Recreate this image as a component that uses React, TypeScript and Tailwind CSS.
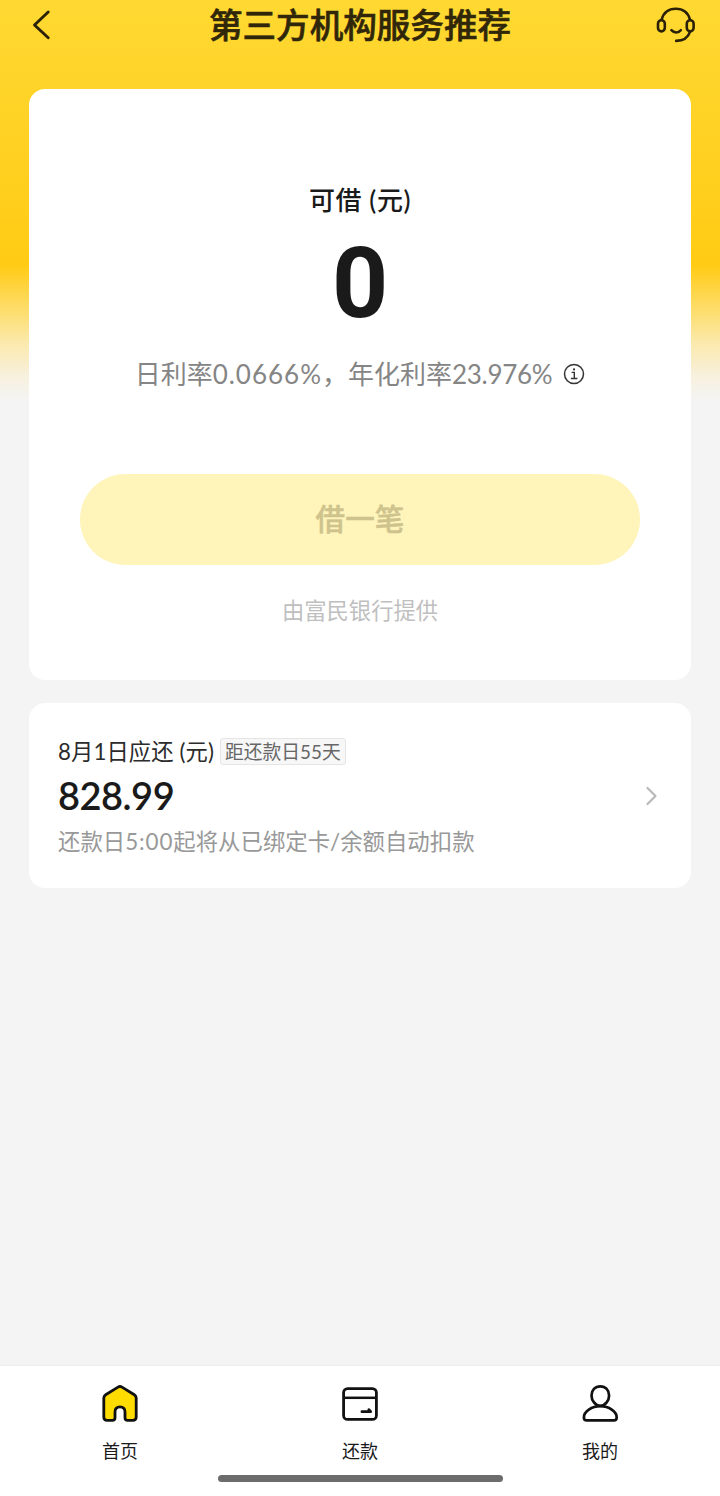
import React from 'react';

function BackIcon() {
  return (
    <svg className="h-10 w-10" viewBox="0 0 40 40" fill="none" stroke="#2b2106" strokeWidth="2.9" strokeLinecap="round" strokeLinejoin="round">
      <path d="M28.2 12 14.5 25 28.2 37.8" />
    </svg>
  );
}

function ServiceIcon() {
  return (
    <svg className="h-11 w-11" viewBox="0 0 44 44" fill="none" stroke="#2b2106" strokeWidth="2.6" strokeLinecap="round">
      <rect x="5" y="20.2" width="6.8" height="11.2" rx="3.4" />
      <rect x="33.8" y="20.2" width="6.8" height="11.2" rx="3.4" />
      <path d="M8.6 19.6C10.6 12.6 16 8.8 22.8 8.8S35 12.6 37 19.6" />
      <path d="M37 31.8c-2 6-7.4 8.9-13.8 9.1" />
      <path d="M18.4 30.2c2.6 3 7 3 9.4 0" />
    </svg>
  );
}

function InfoIcon() {
  return (
    <svg className="h-[22px] w-[22px]" viewBox="0 0 22 22" fill="none" stroke="#333" strokeWidth="1.5">
      <circle cx="11" cy="11" r="9.5" />
      <path d="M8.6 9.4h2.7v6M7.9 15.5h6.5" strokeWidth="1.4" />
      <circle cx="11" cy="6.4" r="1.1" fill="#333" stroke="none" />
    </svg>
  );
}

function HomeIcon() {
  return (
    <svg className="h-10 w-10" viewBox="0 0 40 40" fill="#ffdc00" stroke="#111" strokeWidth="2.8" strokeLinejoin="round">
      <path d="M18 4.1 5.7 11.7Q3.8 12.9 3.8 15V34Q3.8 37.4 7.2 37.4H12.3Q15 37.4 15 34.7V29Q15 23.9 20 23.9T25 29V34.7Q25 37.4 27.7 37.4H32.8Q36.2 37.4 36.2 34V15Q36.2 12.9 34.3 11.7L22 4.1Q20 2.9 18 4.1Z" />
    </svg>
  );
}

function RepayIcon() {
  return (
    <svg className="h-10 w-10" viewBox="0 0 40 40" fill="none" stroke="#111" strokeWidth="2.8" strokeLinecap="round" strokeLinejoin="round">
      <rect x="3.6" y="5.6" width="32.8" height="30.8" rx="4" />
      <path d="M4 14.8h32" strokeWidth="2.5" strokeLinecap="butt" />
      <path d="M21.9 28.7h7v-2.2l1.8 2.2Z" fill="#111" strokeWidth="2.7" />
    </svg>
  );
}

function UserIcon() {
  return (
    <svg className="h-10 w-10" viewBox="0 0 40 40" fill="none" stroke="#111" strokeWidth="2.7" strokeLinejoin="round">
      <path d="M20.3 3.3c-5.2 0-8.8 3.9-8.8 9.1 0 4.8 3.6 10.4 8.8 10.4s8.8-5.6 8.8-10.4c0-5.2-3.6-9.1-8.8-9.1Z" />
      <path d="M20.3 23.2C11.6 23.2 3.9 28.8 3.9 34.4Q3.9 37.3 6.7 37.3H33.9Q36.7 37.3 36.7 34.4C36.7 28.8 29 23.2 20.3 23.2Z" />
    </svg>
  );
}

const tabs = [
  { label: '首页', icon: <HomeIcon /> },
  { label: '还款', icon: <RepayIcon /> },
  { label: '我的', icon: <UserIcon /> },
];

export default function App() {
  return (
    <div className="flex h-[1496px] w-[720px] flex-col overflow-hidden bg-[#f4f4f4] bg-[linear-gradient(180deg,#ffd932_0px,#ffd42a_80px,#ffcb14_265px,#fedb62_305px,#fbeab0_345px,#f7f0dc_375px,#f4f4f4_400px)] font-['Lato','Noto_Sans_CJK_SC',sans-serif] whitespace-nowrap">
      <header className="flex h-[89px] items-start justify-between pr-[23px] pl-5">
        <button aria-label="返回"><BackIcon /></button>
        <h1 className="mt-[2px] ml-[7px] text-[33.6px] leading-[46px] font-medium text-[#30270a] [-webkit-text-stroke:0.6px_#30270a]">第三方机构服务推荐</h1>
        <button aria-label="客服"><ServiceIcon /></button>
      </header>

      <main className="flex flex-1 flex-col gap-[23px] px-[29px]">
        <section className="flex h-[591px] flex-col items-center rounded-2xl bg-white">
          <h2 className="mt-[93px] text-[26px] leading-9 font-medium tracking-[0.6px] text-[#1a1a1a]">可借 (元)</h2>
          <div className="mt-[18px] font-['Roboto',sans-serif] text-[98px] leading-[96px] font-bold text-[#1a1a1a]">0</div>
          <div className="mt-[24px] flex h-9 items-center gap-[11px] text-[26px] leading-9 text-[#858585]">
            <p>日利率<span className="tracking-[1px]">0.0666%</span>，年化利率<span className="tracking-[-0.3px]">23.976%</span></p>
            <InfoIcon />
          </div>
          <button className="mt-[82px] h-[91px] w-[560px] rounded-full bg-[#fff5ba] text-[29.6px] font-medium text-[#cfc38d] [-webkit-text-stroke:0.5px_#cfc38d]">借一笔</button>
          <p className="mt-[30px] text-[22.3px] leading-8 text-[#bfbfbf]">由富民银行提供</p>
        </section>

        <section className="flex h-[185px] items-center justify-between rounded-2xl bg-white pr-7 pl-[29px]">
          <div className="flex flex-col pt-[2px]">
            <div className="flex h-8 items-center gap-[6px]">
              <h3 className="text-[22.3px] leading-8 tracking-[0.1px] text-[#2b2b2b]">8月1日应还 (元)</h3>
              <span className="flex h-[27px] items-center rounded-[3px] border border-[#e5e5e5] bg-[#f7f7f7] px-1 text-[18.8px] leading-6 text-[#666]">距还款日55天</span>
            </div>
            <strong className="mt-[4px] text-[38px] leading-[46px] font-semibold tracking-[-0.5px] text-[#1a1a1a]">828.99</strong>
            <p className="mt-[8px] text-[22.4px] leading-8 text-[#999]">还款日<span className="tracking-[0.9px]">5:00</span>起将从已绑定卡/余额自动扣款</p>
          </div>
          <svg className="h-6 w-6" viewBox="0 0 24 24" fill="none" stroke="#b8b8b8" strokeWidth="2.2" strokeLinecap="round" strokeLinejoin="round">
            <path d="m8.5 4 8 8-8 8" />
          </svg>
        </section>
      </main>

      <nav className="flex h-[131px] flex-col items-center border-t border-[#eeeeee] bg-white">
        <div className="grid w-full grid-cols-3 pt-[17px]">
          {tabs.map((tab) => (
            <button key={tab.label} className="flex flex-col items-center text-[18px] leading-6 text-[#1a1a1a]">
              {tab.icon}
              <span className="mt-4">{tab.label}</span>
            </button>
          ))}
        </div>
        <div className="mt-[12px] h-[7px] w-[285px] rounded-full bg-[#6c6c6c]" />
      </nav>
    </div>
  );
}
